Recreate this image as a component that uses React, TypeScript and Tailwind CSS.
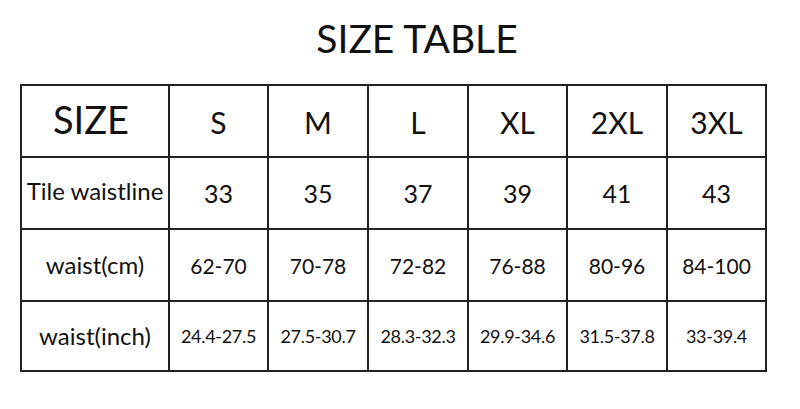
import React from "react";

const sizes = ["S", "M", "L", "XL", "2XL", "3XL"];
const tile = ["33", "35", "37", "39", "41", "43"];
const cm = ["62-70", "70-78", "72-82", "76-88", "80-96", "84-100"];
const inch = ["24.4-27.5", "27.5-30.7", "28.3-32.3", "29.9-34.6", "31.5-37.8", "33-39.4"];
const widths = [148, 99, 100, 100, 99, 100, 99];

export default function App() {
  return (
    <div
      className="w-[800px] h-[409px] bg-white text-[#111]"
      style={{ fontFamily: "Lato, 'Open Sans', sans-serif" }}
    >
      <div className="pt-[15px] pl-[34px] text-center text-[39px] leading-[47px]">
        SIZE TABLE
      </div>
      <div className="pl-[20px] pt-[22px]">
        <table className="border-collapse table-fixed w-[745px]">
          <colgroup>
            {widths.map((w, i) => (
              <col key={i} style={{ width: w }} />
            ))}
          </colgroup>
          <tbody>
            <tr className="h-[72px]">
              <td className="border-2 border-[#222] text-center text-[38px] leading-none pb-[4px] pr-[8px]">SIZE</td>
              {sizes.map((s) => (
                <td key={s} className="border-2 border-[#222] text-center text-[30px] leading-none pt-[2px]">
                  {s}
                </td>
              ))}
            </tr>
            <tr className="h-[72px]">
              <td className="border-2 border-[#222] text-center text-[24px] leading-none pb-[4px] whitespace-nowrap">
                Tile waistline
              </td>
              {tile.map((s) => (
                <td key={s} className="border-2 border-[#222] text-center text-[25px] leading-none">
                  {s}
                </td>
              ))}
            </tr>
            <tr className="h-[72px]">
              <td className="border-2 border-[#222] text-center text-[24px] leading-none">waist(cm)</td>
              {cm.map((s) => (
                <td key={s} className="border-2 border-[#222] text-center text-[21px] leading-none">
                  {s}
                </td>
              ))}
            </tr>
            <tr className="h-[70px]">
              <td className="border-2 border-[#222] text-center text-[24px] leading-none">waist(inch)</td>
              {inch.map((s) => (
                <td key={s} className="border-2 border-[#222] text-center text-[18px] leading-none tracking-[-0.3px]">
                  {s}
                </td>
              ))}
            </tr>
          </tbody>
        </table>
      </div>
    </div>
  );
}
